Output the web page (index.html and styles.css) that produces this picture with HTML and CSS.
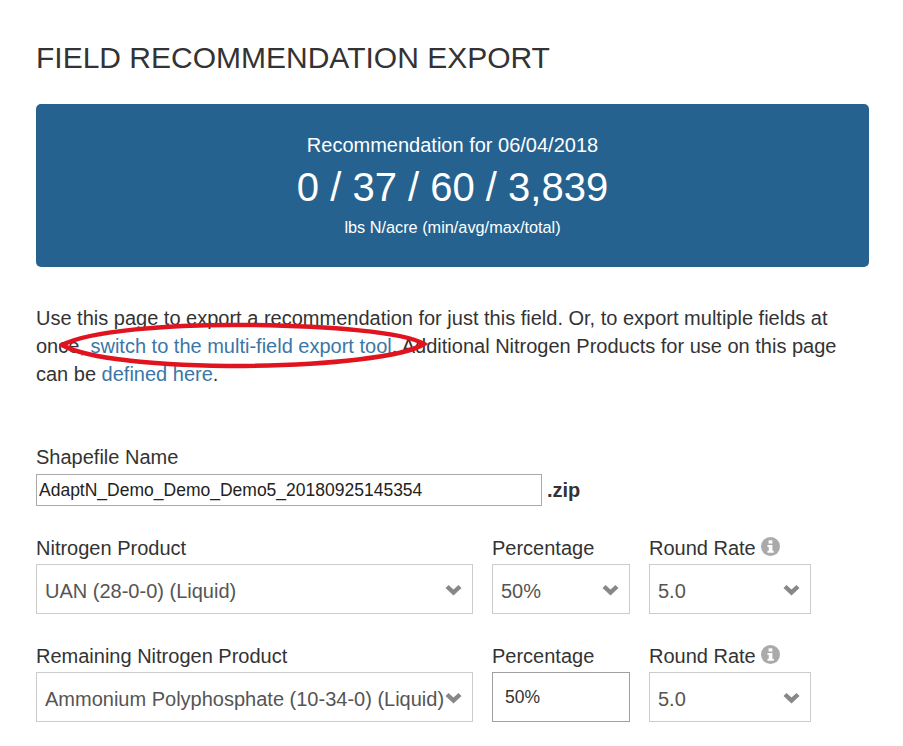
FILE: index.html
```html
<!DOCTYPE html>
<html lang="en">
<head>
    <meta charset="UTF-8">
    <meta name="viewport" content="width=device-width, initial-scale=1.0">
    <title>Field Recommendation Export</title>
    <link rel="stylesheet" href="styles.css">
</head>
<body>
    <h1>Field Recommendation Export</h1>

    <div class="summary">
        <div class="summary-date">Recommendation for 06/04/2018</div>
        <div class="summary-value">0 / 37 / 60 / 3,839</div>
        <div class="summary-unit">lbs N/acre (min/avg/max/total)</div>
    </div>

    <div class="intro-wrap">
        <p class="intro">Use this page to export a recommendation for just this field. Or, to export multiple fields at once, <a href="#">switch to the multi-field export tool</a>. Additional Nitrogen Products for use on this page can be <a href="#">defined here</a>.</p>
        <svg class="scribble" width="370" height="50" viewBox="0 0 370 50">
            <path d="M3 24 C30 10 110 3 190 4 C270 5 345 11 365 23 C345 36 270 44 185 45 C100 45 28 38 3 24 Z" fill="none" stroke="#e0141f" stroke-width="4.5"/>
        </svg>
    </div>

    <form class="export-form">
        <div class="name-group">
            <label for="shapefile">Shapefile Name</label>
            <div class="name-row">
                <input class="name-input" id="shapefile" type="text" value="AdaptN_Demo_Demo_Demo5_20180925145354">
                <strong class="ext">.zip</strong>
            </div>
        </div>

        <div class="form-row">
            <div class="col-product">
                <label>Nitrogen Product</label>
                <div class="select-box">
                    <select><option>UAN (28-0-0) (Liquid)</option></select>
                    <svg class="chevron" viewBox="0 0 16 11"><path d="M0 3 L3 0 L8 4.6 L13 0 L16 3 L8 10.6 Z"/></svg>
                </div>
            </div>
            <div class="col-percent">
                <label>Percentage</label>
                <div class="select-box">
                    <select><option>50%</option></select>
                    <svg class="chevron" viewBox="0 0 16 11"><path d="M0 3 L3 0 L8 4.6 L13 0 L16 3 L8 10.6 Z"/></svg>
                </div>
            </div>
            <div class="col-round">
                <label>Round Rate
                    <svg class="info" viewBox="0 0 20 20"><circle cx="10" cy="10" r="10"/><rect x="8" y="3.5" width="4" height="3.4" fill="#fff"/><path d="M6.8 8.3 H12 V14.4 H13.4 V16.6 H6.8 V14.4 H8.2 V10.5 H6.8 Z" fill="#fff"/></svg>
                </label>
                <div class="select-box">
                    <select><option>5.0</option></select>
                    <svg class="chevron" viewBox="0 0 16 11"><path d="M0 3 L3 0 L8 4.6 L13 0 L16 3 L8 10.6 Z"/></svg>
                </div>
            </div>
        </div>

        <div class="form-row">
            <div class="col-product">
                <label>Remaining Nitrogen Product</label>
                <div class="select-box">
                    <select><option>Ammonium Polyphosphate (10-34-0) (Liquid)</option></select>
                    <svg class="chevron" viewBox="0 0 16 11"><path d="M0 3 L3 0 L8 4.6 L13 0 L16 3 L8 10.6 Z"/></svg>
                </div>
            </div>
            <div class="col-percent">
                <label>Percentage</label>
                <input class="percent-input" type="text" value="50%">
            </div>
            <div class="col-round">
                <label>Round Rate
                    <svg class="info" viewBox="0 0 20 20"><circle cx="10" cy="10" r="10"/><rect x="8" y="3.5" width="4" height="3.4" fill="#fff"/><path d="M6.8 8.3 H12 V14.4 H13.4 V16.6 H6.8 V14.4 H8.2 V10.5 H6.8 Z" fill="#fff"/></svg>
                </label>
                <div class="select-box">
                    <select><option>5.0</option></select>
                    <svg class="chevron" viewBox="0 0 16 11"><path d="M0 3 L3 0 L8 4.6 L13 0 L16 3 L8 10.6 Z"/></svg>
                </div>
            </div>
        </div>
    </form>
</body>
</html>
```

FILE: styles.css
```css
html {
    overflow: hidden;
}
body {
    font-family: "Liberation Sans", Arial, sans-serif;
    font-size: 20px;
    line-height: 28px;
    color: #333;
    margin: 0;
    padding: 0 34px 0 36px;
}
h1 {
    font-size: 30px;
    font-weight: 400;
    line-height: 33px;
    text-transform: uppercase;
    margin: 0;
    padding-top: 41px;
    margin-bottom: 30px;
}
.summary {
    background-color: #25628f;
    color: #fff;
    border-radius: 5px;
    height: 163px;
    box-sizing: border-box;
    padding-top: 27px;
    text-align: center;
}
.summary-date {
    font-size: 20px;
    line-height: 28px;
}
.summary-value {
    font-size: 40px;
    line-height: 50px;
    margin-top: 3px;
}
.summary-unit {
    font-size: 16.3px;
    line-height: 28px;
    margin-top: 1px;
}
.intro-wrap {
    position: relative;
    margin-top: 37px;
}
.intro {
    margin: 0;
}
.intro a {
    color: #3b76a8;
    text-decoration: none;
}
.scribble {
    position: absolute;
    left: 23px;
    top: 17px;
}
.export-form {
    margin-top: 56px;
}
label {
    display: block;
    line-height: 26px;
    white-space: nowrap;
}
.name-row {
    display: flex;
    align-items: center;
    gap: 5px;
    margin-top: 4px;
}
.name-input {
    width: 506px;
    height: 32px;
    box-sizing: border-box;
    border: 1px solid #aaa;
    padding: 0 2px;
    font: 17.5px "Liberation Sans", Arial, sans-serif;
    color: #222;
}
.ext {
    font-size: 20px;
}
.form-row {
    display: flex;
}
.name-group + .form-row {
    margin-top: 29px;
}
.form-row + .form-row {
    margin-top: 29px;
}
.col-product {
    width: 437px;
    margin-right: 19px;
}
.col-percent {
    width: 138px;
    margin-right: 19px;
}
.col-round {
    width: 162px;
}
.select-box {
    position: relative;
    margin-top: 3px;
}
select {
    display: block;
    width: 100%;
    height: 50px;
    box-sizing: border-box;
    appearance: none;
    -webkit-appearance: none;
    background-color: #fff;
    border: 1px solid #ccc;
    border-radius: 0;
    padding: 4px 0 0 8px;
    font: 20px "Liberation Sans", Arial, sans-serif;
    color: #555;
}
.chevron {
    position: absolute;
    right: 11px;
    top: 21px;
    width: 17px;
    height: 11px;
    fill: #888;
}
.percent-input {
    display: block;
    width: 100%;
    height: 50px;
    margin-top: 3px;
    box-sizing: border-box;
    border: 1px solid #a0a0a0;
    padding: 0 12px;
    font: 17.5px "Liberation Sans", Arial, sans-serif;
    color: #333;
}
.info {
    width: 19px;
    height: 19px;
    fill: #aaa;
    vertical-align: -1px;
}
```
